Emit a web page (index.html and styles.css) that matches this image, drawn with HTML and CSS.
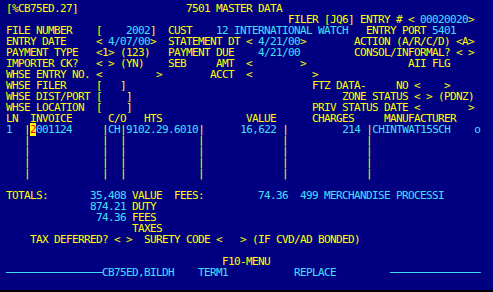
FILE: index.html
```html
<!DOCTYPE html>
<html>
<head>
<meta charset="utf-8">
<title>7501 MASTER DATA</title>
<link rel="stylesheet" href="styles.css">
</head>
<body>
<div class="screen">
<div class="row"> [%CB75ED.27]                  7501 MASTER DATA</div>
<div class="row">                                                FILER [JQ6] ENTRY # &lt; <span class="c">00020020</span>&gt;</div>
<div class="row"> FILE NUMBER    [    <span class="c">2002</span>]  CUST    <span class="c">12 INTERNATIONAL WATCH</span>   ENTRY PORT <span class="c">5401</span></div>
<div class="row"> ENTRY DATE     &lt; <span class="c">4/07/00</span>&gt;  STATEMENT DT &lt; <span class="c">4/21/00</span>&gt;        ACTION (A/R/C/D) &lt;A&gt;</div>
<div class="row"> PAYMENT TYPE   &lt;1&gt; (123)   PAYMENT DUE    <span class="c">4/21/00</span>         CONSOL/INFORMAL? &lt; &gt;</div>
<div class="row"> IMPORTER CK?   &lt; &gt; (YN)    SEB     AMT  &lt;        &gt;                 AII FLG</div>
<div class="row"> WHSE ENTRY NO. &lt;         &gt;        ACCT  &lt;          &gt;</div>
<div class="row"> WHSE FILER     [   ]                               FTZ DATA-     NO &lt;    &gt;</div>
<div class="row"> WHSE DIST/PORT [    ]                                   ZONE STATUS &lt; &gt; (PDNZ)</div>
<div class="row"> WHSE LOCATION  [    ]                              PRIV STATUS DATE &lt;        &gt;</div>
<div class="row"> LN  INVOICE      C/O   HTS              VALUE      CHARGES     MANUFACTURER</div>
<div class="row"><span class="c"> 1</span>  |<span class="cur">2</span><span class="c">001124</span>     |<span class="c">CH</span>|<span class="c">9102.29.6010</span>|      <span class="c">16,622</span> |         <span class="c">214</span> |<span class="c">CHINTWAT15SCH</span>    <span class="c">o</span></div>
<div class="row">    |            |  |            |             |             |</div>
<div class="row">    |            |  |            |             |             |</div>
<div class="row">    |            |  |            |             |             |</div>
<div class="row">    |            |  |            |             |             |</div>
<div class="row"> </div>
<div class="row"> TOTALS:       <span class="c">35,408</span> VALUE  FEES:         <span class="c">74.36  499 MERCHANDISE PROCESSI</span></div>
<div class="row">               <span class="c">874.21</span> DUTY</div>
<div class="row">                <span class="c">74.36</span> FEES</div>
<div class="row">                      TAXES</div>
<div class="row">     TAX DEFERRED? &lt; &gt;  SURETY CODE &lt;   &gt; (IF CVD/AD BONDED)</div>
<div class="row"> </div>
<div class="row">                                     F10-MENU</div>
<div class="row c"> ────────────────CB75ED,BILDH    TERM1           REPLACE         ───────────────</div>
</div>
</body>
</html>
```

FILE: styles.css
```css
html, body {
  margin: 0;
  padding: 0;
  background: #000000;
}

.screen {
  box-sizing: border-box;
  width: 493px;
  height: 290px;
  padding-top: 3px;
  background: #000080;
  color: #ffff00;
  font-family: "DejaVu Sans Mono", "Liberation Mono", monospace;
  font-size: 11px;
  line-height: 11px;
  letter-spacing: -0.622px;
  overflow: hidden;
}

.row {
  white-space: pre;
  height: 11px;
}

.c {
  color: #40e0ff;
}

.cur {
  background: #ffff00;
  color: #ff0000;
}
```
